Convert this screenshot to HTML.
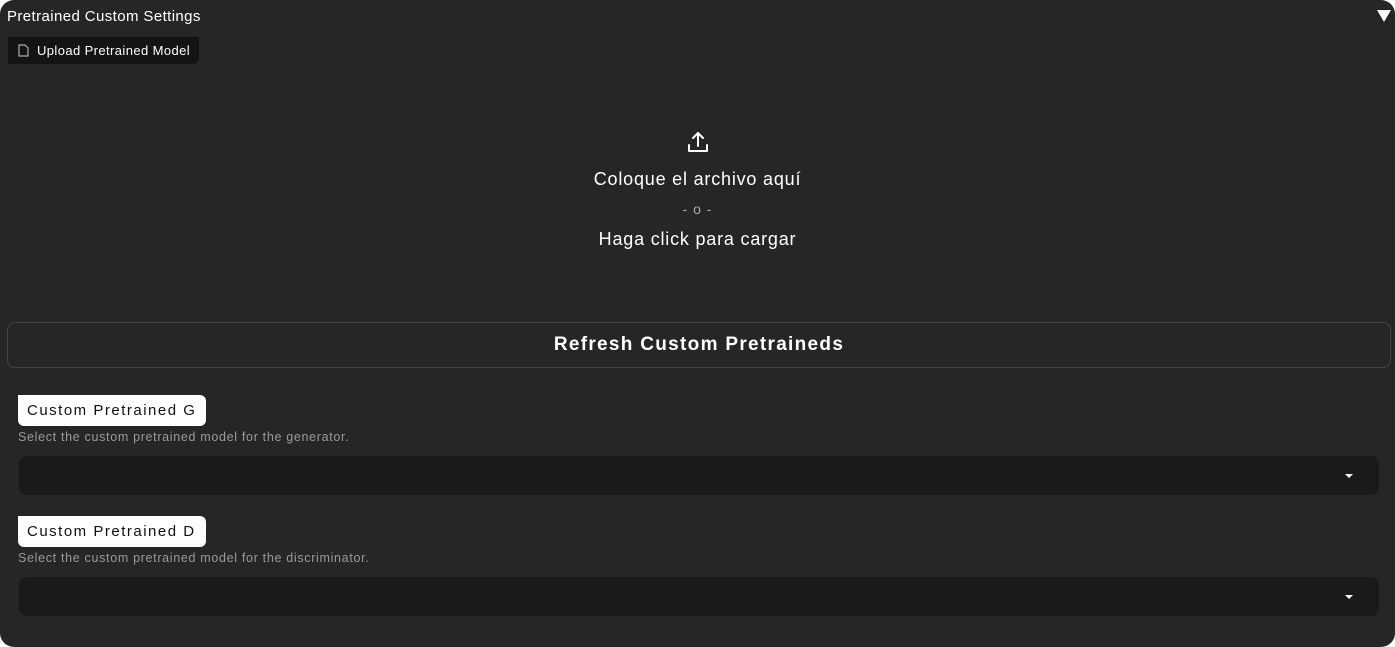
<!DOCTYPE html>
<html><head><meta charset="utf-8"><style>
*{box-sizing:border-box;margin:0;padding:0}
html,body{width:1395px;height:647px;background:#fff;overflow:hidden;font-family:"Liberation Sans",sans-serif}
.panel{position:absolute;left:0;top:0;width:1395px;height:647px;background:#262626;border-radius:14px;color:#fff}
.title{position:absolute;left:7px;top:8px;font-size:15px;color:#fff;letter-spacing:0.4px}
.tri{position:absolute;left:1377px;top:10px;width:0;height:0;border-left:7px solid transparent;border-right:7px solid transparent;border-top:12px solid #fff}
.upbtn{position:absolute;left:8px;top:37px;width:191px;height:27px;background:#141414;border-radius:0 0 6px 0;font-size:13px;color:#fff;padding:6px 0 0 29px;letter-spacing:0.4px}
.upbtn svg{position:absolute;left:10px;top:7px}
.center{position:absolute;left:0;width:1395px;text-align:center;color:#fff}
.big{font-size:18px;letter-spacing:0.8px}
.refresh{position:absolute;left:7px;top:322px;width:1384px;height:46px;border:1px solid #444;border-radius:8px;text-align:center;font-size:19px;font-weight:bold;line-height:44px;letter-spacing:1.3px}
.lbl{position:absolute;left:18px;width:188px;height:31px;background:#fff;color:#111;border-radius:0 6px 6px 6px;font-size:15px;padding:7px 0 0 9px;letter-spacing:1.5px}
.desc{position:absolute;left:18px;font-size:12.5px;color:#9a9a9a;letter-spacing:0.68px}
.dd{position:absolute;left:19px;width:1360px;height:39px;background:#1a1a1a;border-radius:8px}
.dd:after{content:"";position:absolute;right:26px;top:18px;border-left:4px solid transparent;border-right:4px solid transparent;border-top:4px solid #fff}
</style></head><body>
<div class="panel">
<div class="title">Pretrained Custom Settings</div>
<div class="tri"></div>
<div class="upbtn"><svg width="11" height="13" viewBox="0 0 11 13"><path d="M1 1h6l3 3v8H1z" fill="none" stroke="#aaa" stroke-width="1.2"/></svg>Upload Pretrained Model</div>
<div class="center" style="top:130px"><svg width="24" height="24" viewBox="0 0 24 24" fill="none" stroke="#fff" stroke-width="2" stroke-linecap="round" stroke-linejoin="round"><path d="M3 15v6h18v-6"/><path d="M12 16V3"/><path d="M7 8l5-5 5 5"/></svg></div>
<div class="center big" style="top:169px">Coloque el archivo aquí</div>
<div class="center" style="top:201px;font-size:14px;color:#aaa;letter-spacing:1px">- o -</div>
<div class="center big" style="top:229px">Haga click para cargar</div>
<div class="refresh">Refresh Custom Pretraineds</div>
<div class="lbl" style="top:395px">Custom Pretrained G</div>
<div class="desc" style="top:430px">Select the custom pretrained model for the generator.</div>
<div class="dd" style="top:456px"></div>
<div class="lbl" style="top:516px">Custom Pretrained D</div>
<div class="desc" style="top:551px">Select the custom pretrained model for the discriminator.</div>
<div class="dd" style="top:577px"></div>
</div>
</body></html>
